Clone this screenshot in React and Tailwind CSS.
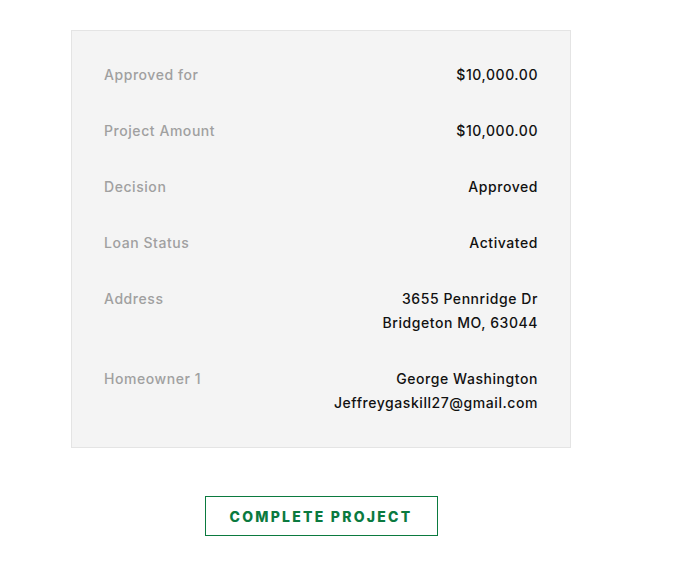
import React from 'react';

const rows = [
    { label: 'Approved for', value: ['$10,000.00'] },
    { label: 'Project Amount', value: ['$10,000.00'] },
    { label: 'Decision', value: ['Approved'] },
    { label: 'Loan Status', value: ['Activated'] },
    { label: 'Address', value: ['3655 Pennridge Dr', 'Bridgeton MO, 63044'] },
    { label: 'Homeowner 1', value: ['George Washington', 'Jeffreygaskill27@gmail.com'] },
];

export default function App() {
    return (
        <div className="min-h-screen bg-white font-['Inter',sans-serif]">
            <div className="ml-[71px] pt-[30px] w-[500px] flex flex-col items-center">
                <div className="w-full bg-[#f4f4f4] border border-[#e4e4e4] px-8 py-8 flex flex-col gap-8">
                    {rows.map(row => (
                        <div key={row.label} className="flex justify-between text-[14px] leading-6 tracking-[0.04em]">
                            <span className="text-[#a0a0a0] font-medium">{row.label}</span>
                            <div className="text-right text-[#111] font-medium">
                                {row.value.map(v => (
                                    <div key={v}>{v}</div>
                                ))}
                            </div>
                        </div>
                    ))}
                </div>
                <button className="mt-[48px] w-[233px] h-10 border border-[#0b7a3f] text-[#0b7a3f] text-[14px] font-extrabold uppercase tracking-[0.16em] flex items-center justify-center">
                    Complete Project
                </button>
            </div>
        </div>
    );
}
